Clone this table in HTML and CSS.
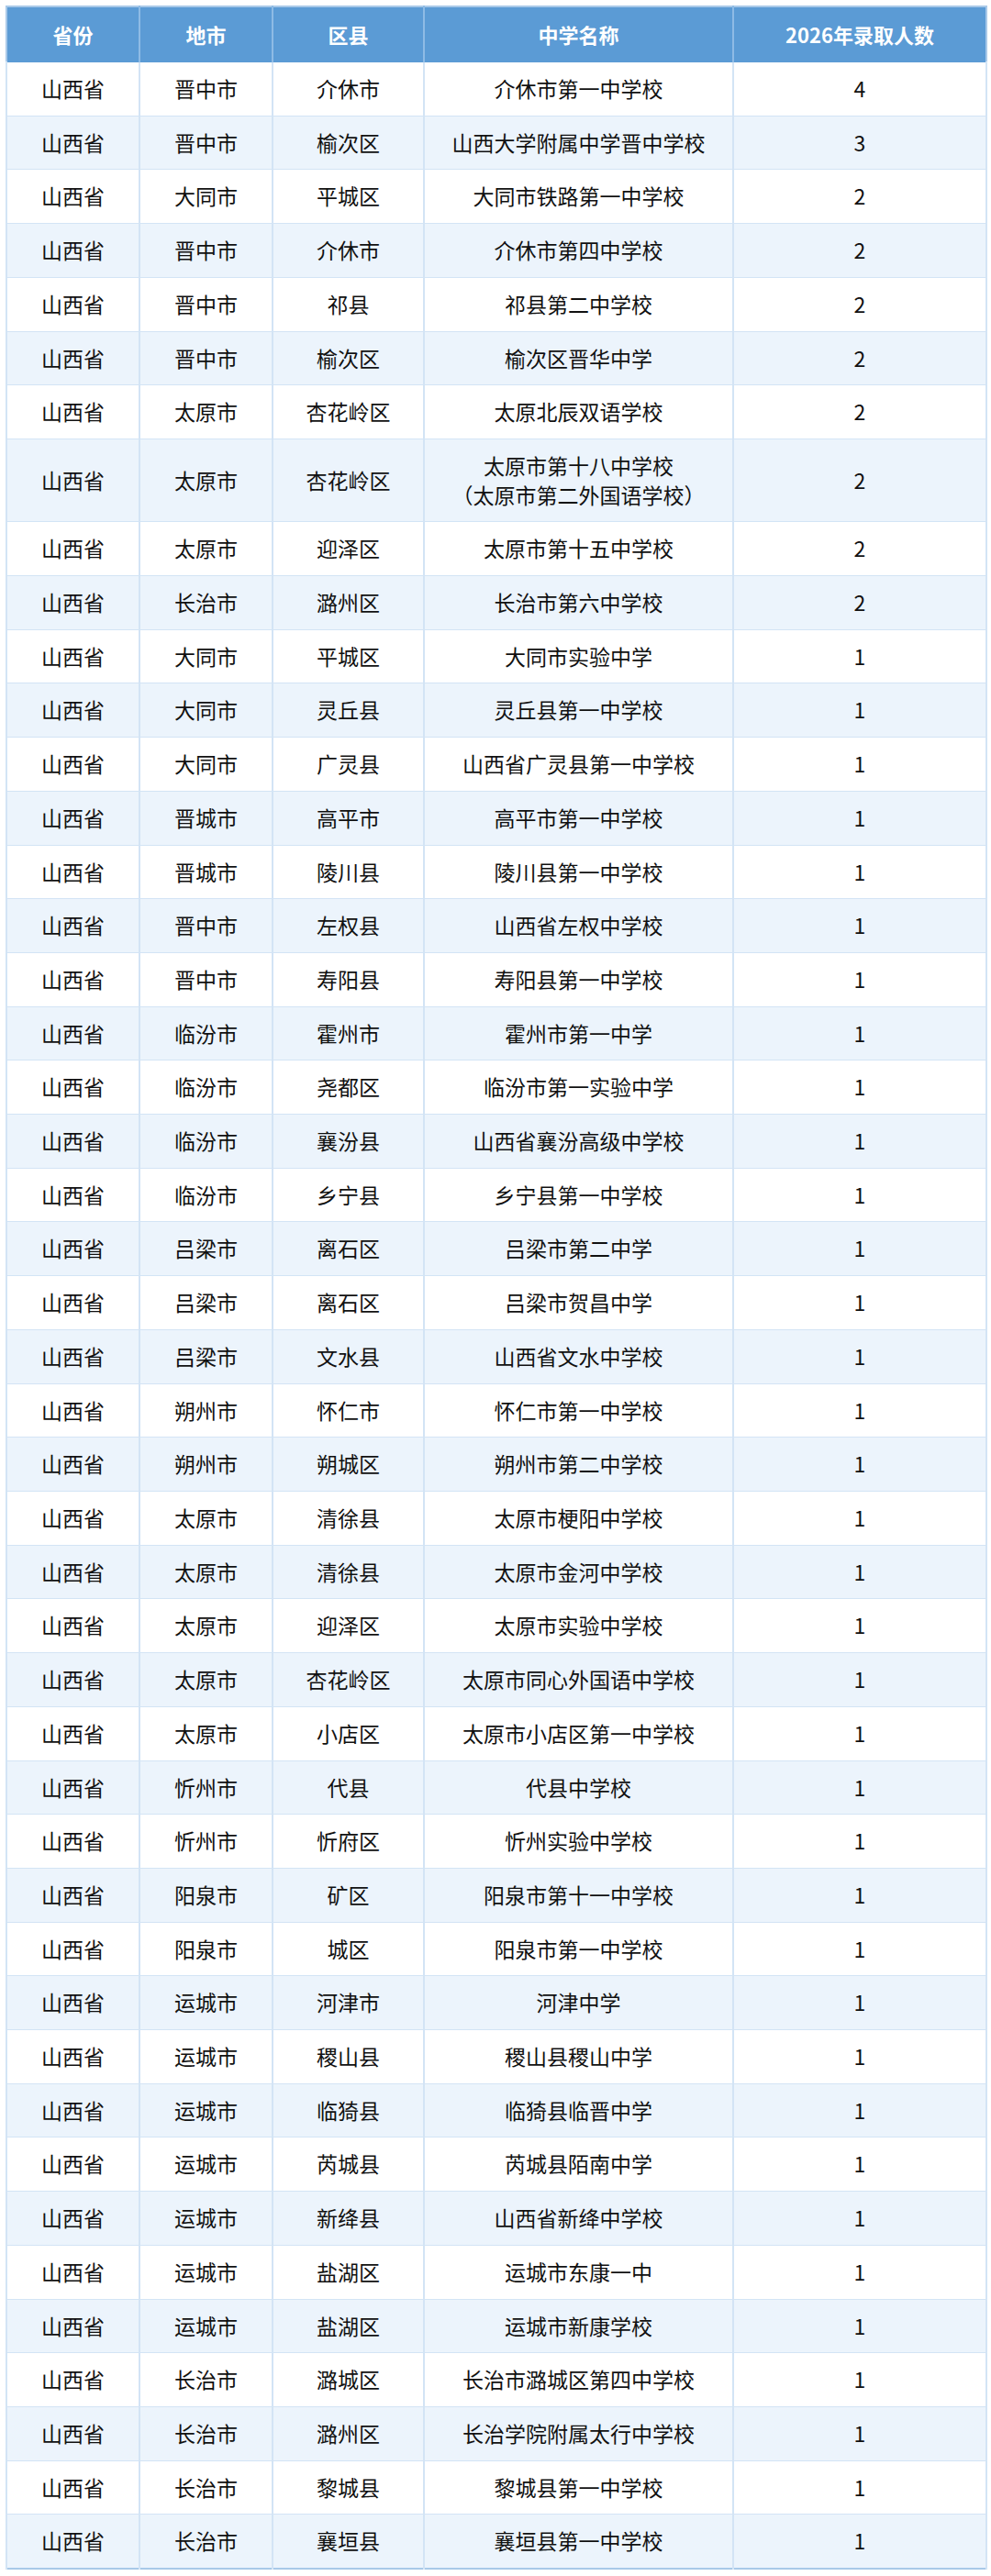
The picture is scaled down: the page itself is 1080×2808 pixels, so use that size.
FILE: index.html
```html
<!DOCTYPE html>
<html lang="zh-CN">
<head>
<meta charset="utf-8">
<title>2026年录取人数</title>
<link rel="stylesheet" href="styles.css">
</head>
<body>
<div class="wrap">
<table class="admit">
<colgroup>
<col class="c1"><col class="c2"><col class="c3"><col class="c4"><col class="c5">
</colgroup>
<thead>
<tr><th>省份</th><th>地市</th><th>区县</th><th>中学名称</th><th>2026年录取人数</th></tr>
</thead>
<tbody>
<tr><td>山西省</td><td>晋中市</td><td>介休市</td><td>介休市第一中学校</td><td>4</td></tr>
<tr><td>山西省</td><td>晋中市</td><td>榆次区</td><td>山西大学附属中学晋中学校</td><td>3</td></tr>
<tr><td>山西省</td><td>大同市</td><td>平城区</td><td>大同市铁路第一中学校</td><td>2</td></tr>
<tr><td>山西省</td><td>晋中市</td><td>介休市</td><td>介休市第四中学校</td><td>2</td></tr>
<tr><td>山西省</td><td>晋中市</td><td>祁县</td><td>祁县第二中学校</td><td>2</td></tr>
<tr><td>山西省</td><td>晋中市</td><td>榆次区</td><td>榆次区晋华中学</td><td>2</td></tr>
<tr><td>山西省</td><td>太原市</td><td>杏花岭区</td><td>太原北辰双语学校</td><td>2</td></tr>
<tr><td>山西省</td><td>太原市</td><td>杏花岭区</td><td>太原市第十八中学校<br>（太原市第二外国语学校）</td><td>2</td></tr>
<tr><td>山西省</td><td>太原市</td><td>迎泽区</td><td>太原市第十五中学校</td><td>2</td></tr>
<tr><td>山西省</td><td>长治市</td><td>潞州区</td><td>长治市第六中学校</td><td>2</td></tr>
<tr><td>山西省</td><td>大同市</td><td>平城区</td><td>大同市实验中学</td><td>1</td></tr>
<tr><td>山西省</td><td>大同市</td><td>灵丘县</td><td>灵丘县第一中学校</td><td>1</td></tr>
<tr><td>山西省</td><td>大同市</td><td>广灵县</td><td>山西省广灵县第一中学校</td><td>1</td></tr>
<tr><td>山西省</td><td>晋城市</td><td>高平市</td><td>高平市第一中学校</td><td>1</td></tr>
<tr><td>山西省</td><td>晋城市</td><td>陵川县</td><td>陵川县第一中学校</td><td>1</td></tr>
<tr><td>山西省</td><td>晋中市</td><td>左权县</td><td>山西省左权中学校</td><td>1</td></tr>
<tr><td>山西省</td><td>晋中市</td><td>寿阳县</td><td>寿阳县第一中学校</td><td>1</td></tr>
<tr><td>山西省</td><td>临汾市</td><td>霍州市</td><td>霍州市第一中学</td><td>1</td></tr>
<tr><td>山西省</td><td>临汾市</td><td>尧都区</td><td>临汾市第一实验中学</td><td>1</td></tr>
<tr><td>山西省</td><td>临汾市</td><td>襄汾县</td><td>山西省襄汾高级中学校</td><td>1</td></tr>
<tr><td>山西省</td><td>临汾市</td><td>乡宁县</td><td>乡宁县第一中学校</td><td>1</td></tr>
<tr><td>山西省</td><td>吕梁市</td><td>离石区</td><td>吕梁市第二中学</td><td>1</td></tr>
<tr><td>山西省</td><td>吕梁市</td><td>离石区</td><td>吕梁市贺昌中学</td><td>1</td></tr>
<tr><td>山西省</td><td>吕梁市</td><td>文水县</td><td>山西省文水中学校</td><td>1</td></tr>
<tr><td>山西省</td><td>朔州市</td><td>怀仁市</td><td>怀仁市第一中学校</td><td>1</td></tr>
<tr><td>山西省</td><td>朔州市</td><td>朔城区</td><td>朔州市第二中学校</td><td>1</td></tr>
<tr><td>山西省</td><td>太原市</td><td>清徐县</td><td>太原市梗阳中学校</td><td>1</td></tr>
<tr><td>山西省</td><td>太原市</td><td>清徐县</td><td>太原市金河中学校</td><td>1</td></tr>
<tr><td>山西省</td><td>太原市</td><td>迎泽区</td><td>太原市实验中学校</td><td>1</td></tr>
<tr><td>山西省</td><td>太原市</td><td>杏花岭区</td><td>太原市同心外国语中学校</td><td>1</td></tr>
<tr><td>山西省</td><td>太原市</td><td>小店区</td><td>太原市小店区第一中学校</td><td>1</td></tr>
<tr><td>山西省</td><td>忻州市</td><td>代县</td><td>代县中学校</td><td>1</td></tr>
<tr><td>山西省</td><td>忻州市</td><td>忻府区</td><td>忻州实验中学校</td><td>1</td></tr>
<tr><td>山西省</td><td>阳泉市</td><td>矿区</td><td>阳泉市第十一中学校</td><td>1</td></tr>
<tr><td>山西省</td><td>阳泉市</td><td>城区</td><td>阳泉市第一中学校</td><td>1</td></tr>
<tr><td>山西省</td><td>运城市</td><td>河津市</td><td>河津中学</td><td>1</td></tr>
<tr><td>山西省</td><td>运城市</td><td>稷山县</td><td>稷山县稷山中学</td><td>1</td></tr>
<tr><td>山西省</td><td>运城市</td><td>临猗县</td><td>临猗县临晋中学</td><td>1</td></tr>
<tr><td>山西省</td><td>运城市</td><td>芮城县</td><td>芮城县陌南中学</td><td>1</td></tr>
<tr><td>山西省</td><td>运城市</td><td>新绛县</td><td>山西省新绛中学校</td><td>1</td></tr>
<tr><td>山西省</td><td>运城市</td><td>盐湖区</td><td>运城市东康一中</td><td>1</td></tr>
<tr><td>山西省</td><td>运城市</td><td>盐湖区</td><td>运城市新康学校</td><td>1</td></tr>
<tr><td>山西省</td><td>长治市</td><td>潞城区</td><td>长治市潞城区第四中学校</td><td>1</td></tr>
<tr><td>山西省</td><td>长治市</td><td>潞州区</td><td>长治学院附属太行中学校</td><td>1</td></tr>
<tr><td>山西省</td><td>长治市</td><td>黎城县</td><td>黎城县第一中学校</td><td>1</td></tr>
<tr><td>山西省</td><td>长治市</td><td>襄垣县</td><td>襄垣县第一中学校</td><td>1</td></tr>
</tbody>
</table>
</div>
</body>
</html>
```

FILE: styles.css
```css
html, body {
  margin: 0;
  padding: 0;
  background: #ffffff;
}

.wrap {
  padding: 6px 0 0 6px;
}

.admit {
  width: 1068px;
  border-collapse: collapse;
  table-layout: fixed;
  font-family: "Noto Sans CJK SC", "Noto Sans", sans-serif;
  color: #111111;
  border: 2px solid #a9c9e8;
}

.c1 { width: 145px; }
.c2 { width: 145px; }
.c3 { width: 165px; }
.c4 { width: 337px; }
.c5 { width: 276px; }

.admit th {
  background: #5b9bd5;
  color: #ffffff;
  font-size: 22px;
  font-weight: 700;
  line-height: 31px;
  padding: 14px 4px 14px 4px;
  text-align: center;
  border-left: 2px solid #8ebbe5;
  border-bottom: 1px solid #5b9bd5;
}

.admit th:first-child {
  border-left: none;
}

.admit td {
  font-size: 23px;
  font-weight: 400;
  line-height: 31.7px;
  padding: 13px 4px 13px 4px;
  text-align: center;
  border: 2px solid #d3e4f5;
  border-top-width: 1px;
  border-bottom-width: 1px;
}

.admit tbody tr:nth-child(even) td {
  background: #ecf4fc;
}

.admit tbody tr:nth-child(odd) td {
  background: #ffffff;
}
```
